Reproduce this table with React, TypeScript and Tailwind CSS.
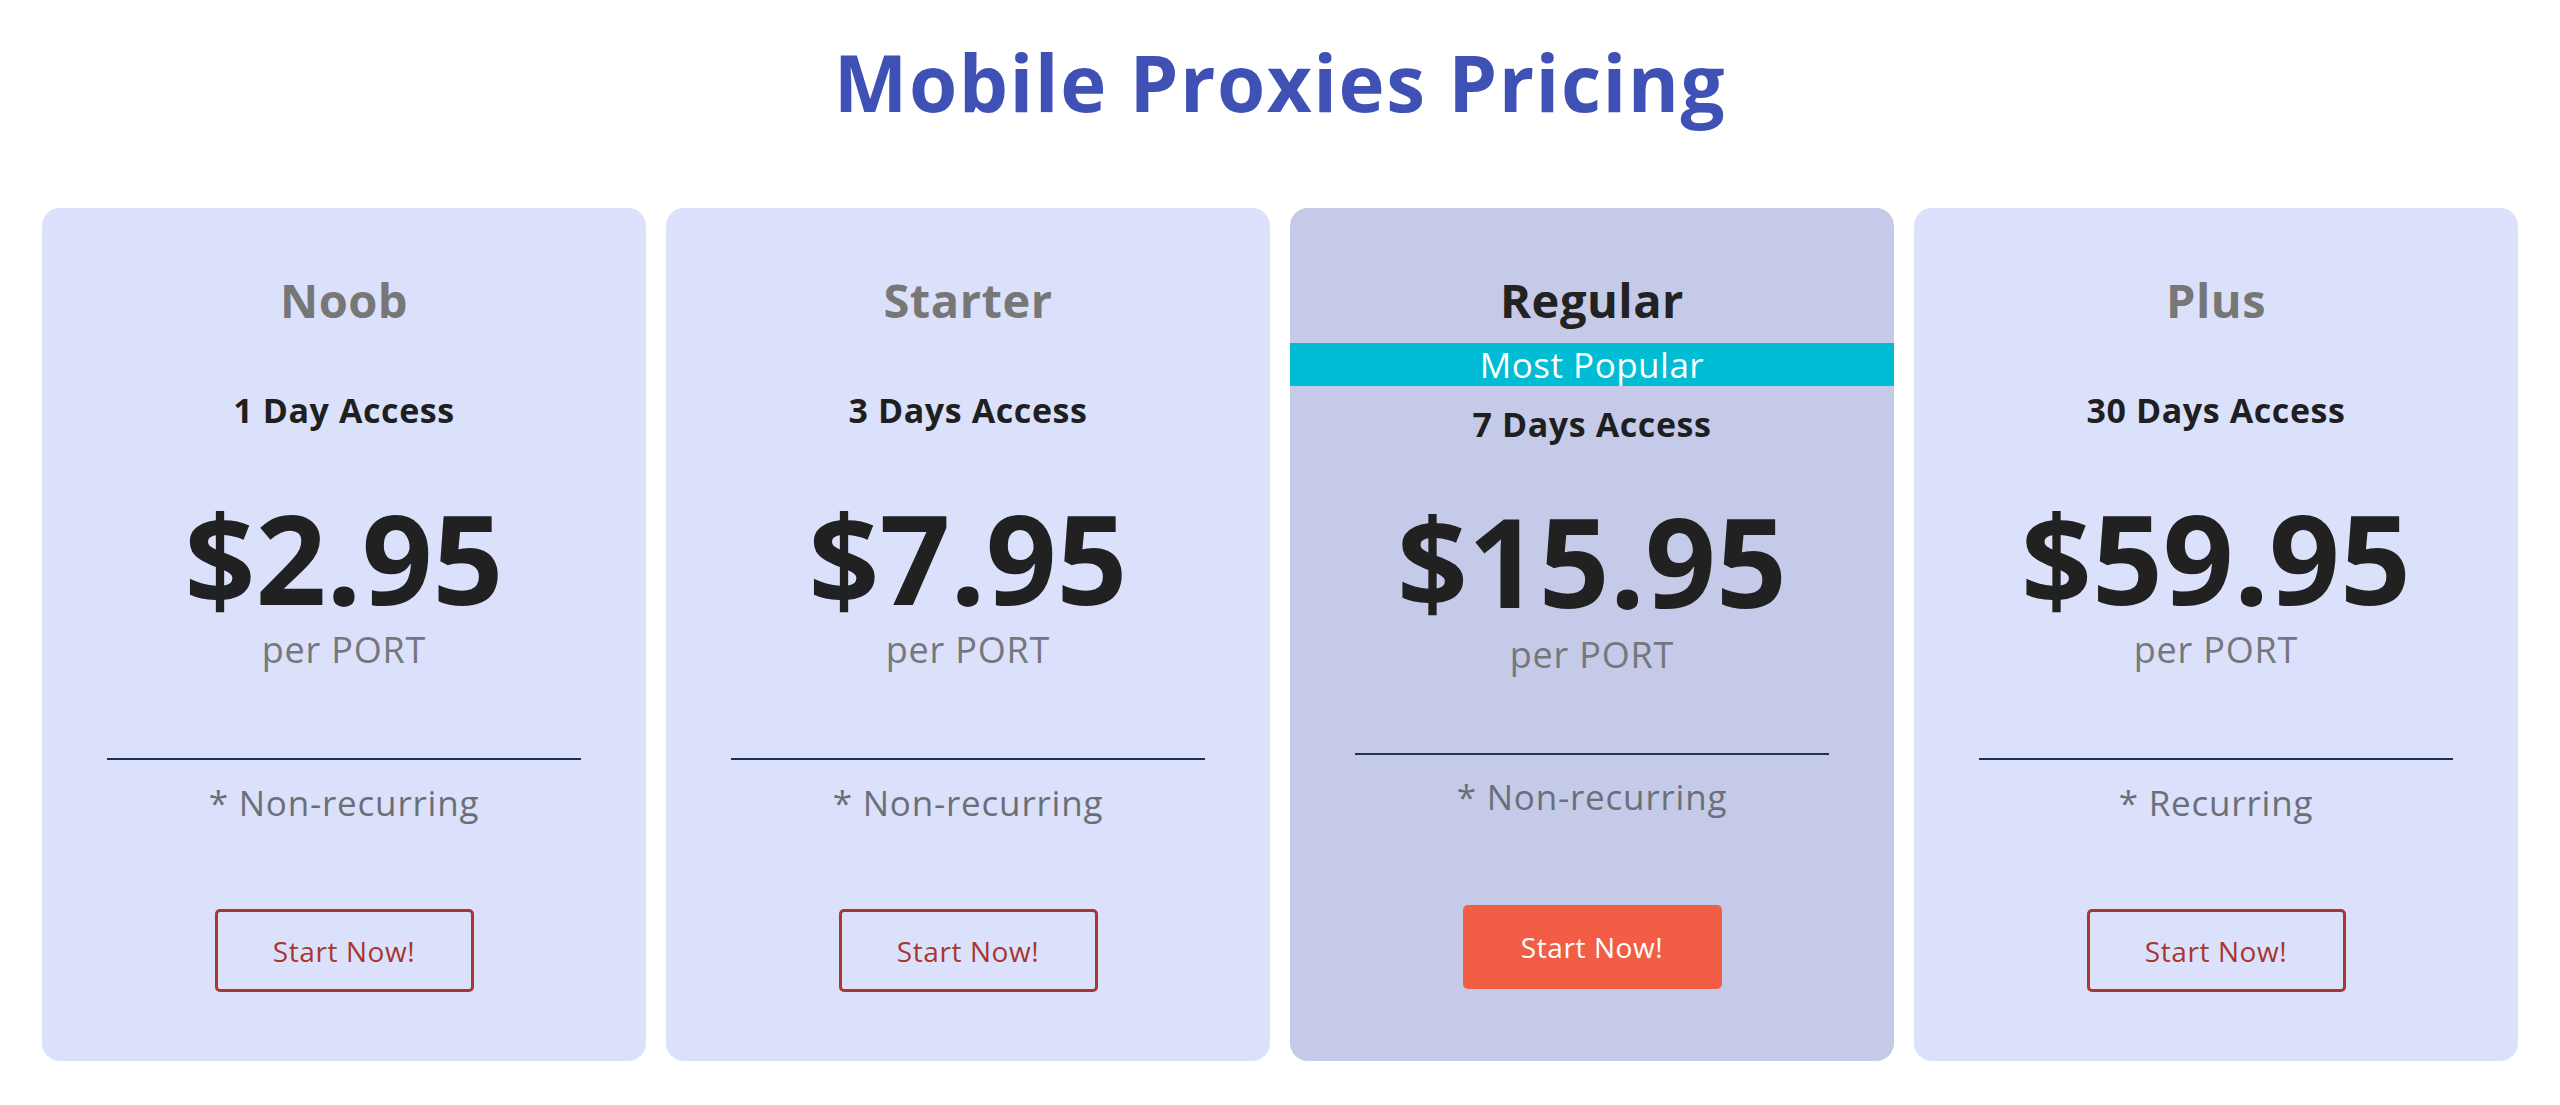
import React from 'react';

type Plan = {
    name: string;
    access: string;
    price: string;
    note: string;
    popular?: boolean;
};

const plans: Plan[] = [
    { name: 'Noob', access: '1 Day Access', price: '$2.95', note: '* Non-recurring' },
    { name: 'Starter', access: '3 Days Access', price: '$7.95', note: '* Non-recurring' },
    { name: 'Regular', access: '7 Days Access', price: '$15.95', note: '* Non-recurring', popular: true },
    { name: 'Plus', access: '30 Days Access', price: '$59.95', note: '* Recurring' },
];

const font = { fontFamily: '"Open Sans", "Noto Sans", sans-serif' };

function PlanCard({ plan }: { plan: Plan }) {
    // the popular card gets the cyan band, so its spacing is a bit tighter
    const pop = !!plan.popular;

    return (
        <div
            className={`flex flex-col items-center h-[853px] rounded-[18px] pt-[68px] ${pop ? 'bg-[#c5cae9]' : 'bg-[#dce1fb]'}`}
        >
            <h3 className={`h-[48px] leading-[48px] text-[47px] font-bold tracking-[0.5px] ${pop ? 'text-[#222222]' : 'text-[#777777]'}`}>
                {plan.name}
            </h3>

            {pop && (
                <div className="mt-[19px] w-full h-[43px] bg-[#00bcd4] text-white text-[35px] leading-[43px] font-medium tracking-[0.5px] text-center">
                    Most Popular
                </div>
            )}

            <p className={`h-[40px] leading-[40px] text-[34px] font-bold tracking-[0.6px] text-[#1f1f1f] ${pop ? 'mt-[18px]' : 'mt-[66px]'}`}>
                {plan.access}
            </p>

            <p className={`h-[130px] leading-[130px] text-[124px] font-bold text-[#212121] ${pop ? 'mt-[51px]' : 'mt-[62px]'}`}>
                {plan.price}
            </p>

            <p className={`h-[40px] leading-[40px] text-[36px] tracking-[0.8px] text-[#74777c] ${pop ? 'mt-[10px]' : 'mt-[8px]'}`}>
                per PORT
            </p>

            <div className={`w-[474px] h-[2px] bg-[#1f3355] ${pop ? 'mt-[78px]' : 'mt-[88px]'}`} />

            <p className={`h-[40px] leading-[40px] text-[35px] tracking-[0.8px] text-[#6b7078] ${pop ? 'mt-[22px]' : 'mt-[23px]'}`}>
                {plan.note}
            </p>

            {pop ? (
                <button className="mt-[88px] w-[259px] h-[84px] rounded-[5px] bg-[#f25e45] text-white text-[28px] font-medium tracking-[0.6px]">
                    Start Now!
                </button>
            ) : (
                <button className="mt-[86px] w-[259px] h-[83px] rounded-[5px] border-[3px] border-[#a9362f] text-[#a9362f] text-[28px] font-medium tracking-[0.6px]">
                    Start Now!
                </button>
            )}
        </div>
    );
}

export default function App() {
    return (
        <div className="min-h-screen bg-white pt-[42px]" style={font}>
            <h1 className="h-[80px] leading-[80px] text-center text-[78px] font-bold tracking-[1.5px] text-[#3f51b5]">
                Mobile Proxies Pricing
            </h1>
            <div className="mt-[86px] grid grid-cols-4 gap-[20px] px-[42px]">
                {plans.map((plan) => (
                    <PlanCard key={plan.name} plan={plan} />
                ))}
            </div>
        </div>
    );
}
